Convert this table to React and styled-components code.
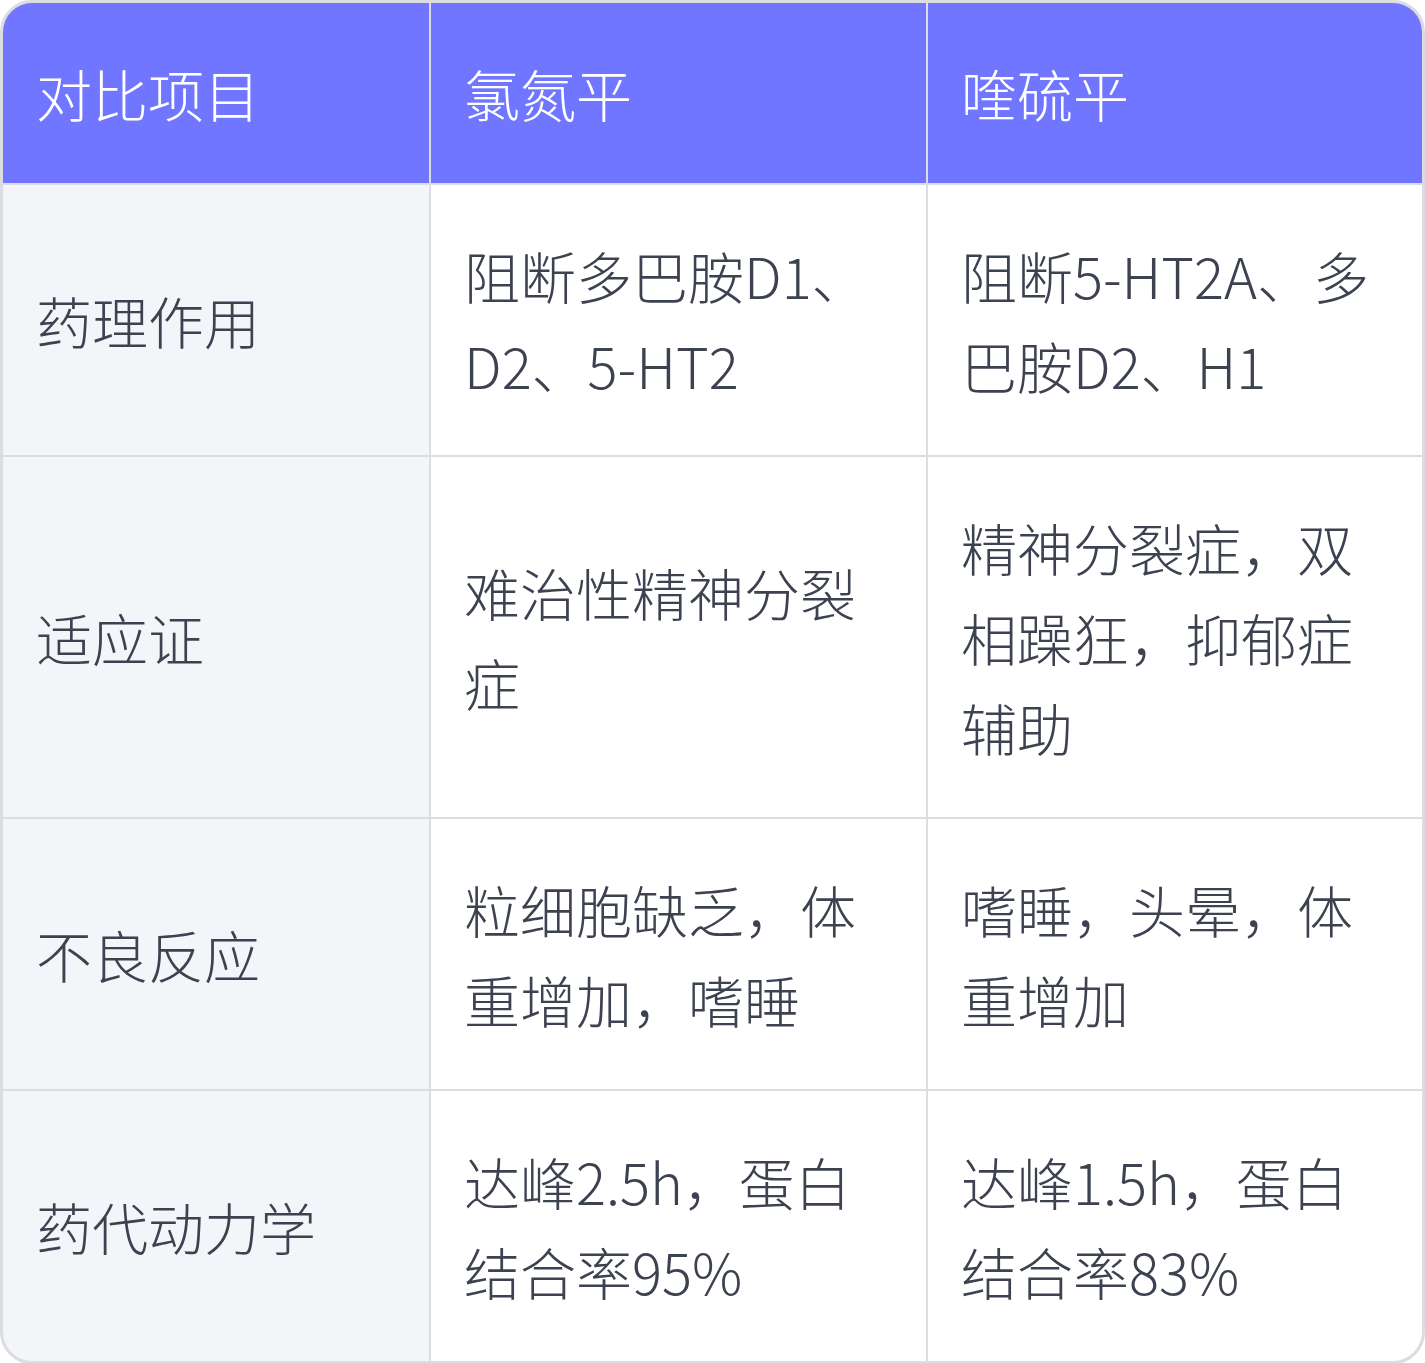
import React from "react";
import styled, { createGlobalStyle } from "styled-components";

const Global = createGlobalStyle`
  html, body { margin: 0; padding: 0; background: #ffffff; }
  body { font-family: "Noto Sans CJK SC Light", "Noto Sans CJK SC DemiLight", "Noto Sans CJK SC", "Noto Sans", sans-serif; }
`;

const Table = styled.div`
  width: 1425px;
  box-sizing: border-box;
  display: grid;
  grid-template-columns: 426px 495px 494px;
  gap: 2px;
  background: #dcdde3;
  border: 3px solid #dcdde3;
  border-radius: 32px;
  overflow: hidden;
`;

const Cell = styled.div`
  box-sizing: border-box;
  display: flex;
  align-items: center;
  padding: 45px 35px 45px 33px;
  font-size: 56px;
  line-height: 90px;
  font-weight: 300;
  background: ${(p) => (p.$head ? "#7076ff" : p.$label ? "#f4f5f9" : "#ffffff")};
  color: ${(p) => (p.$head ? "#ffffff" : "#3d4250")};
  word-break: break-all;
`;

const head = ["对比项目", "氯氮平", "喹硫平"];
const rows = [
  ["药理作用", "阻断多巴胺D1、D2、5-HT2", "阻断5-HT2A、多巴胺D2、H1"],
  ["适应证", "难治性精神分裂症", "精神分裂症，双相躁狂，抑郁症辅助"],
  ["不良反应", "粒细胞缺乏，体重增加，嗜睡", "嗜睡，头晕，体重增加"],
  ["药代动力学", "达峰2.5h，蛋白结合率95%", "达峰1.5h，蛋白结合率83%"],
];

export default function App() {
  return (
    <>
      <Global />
      <Table>
        {head.map((h) => (
          <Cell key={h} $head>{h}</Cell>
        ))}
        {rows.map((r) =>
          r.map((c, i) => (
            <Cell key={r[0] + i} $label={i === 0}>{c}</Cell>
          ))
        )}
      </Table>
    </>
  );
}
